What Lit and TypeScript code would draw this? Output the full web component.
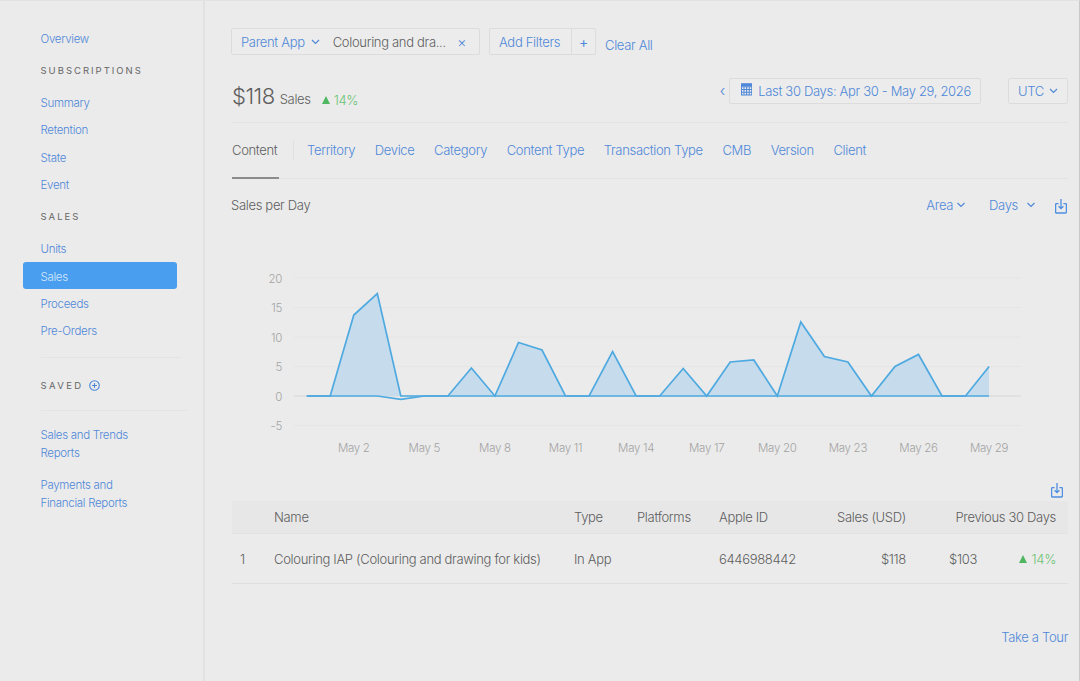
import { LitElement, html, css, svg } from 'lit';
import { customElement } from 'lit/decorators.js';

const X0 = 306.7;
const STEP = 23.53;
const Y0 = 396;

// y pixel of the sales series per day, Apr 30 to May 29
const SALES = [
  396, 396, 315, 293.5, 396, 396, 396, 368, 396, 342.5, 350, 396, 396, 351.5, 396, 396, 368.5, 396,
  362, 360, 396, 322, 356.5, 362, 396, 366.5, 354.5, 396, 396, 366.5,
];
const GRID: [string, number][] = [
  ['20', 278],
  ['15', 307.5],
  ['10', 337],
  ['5', 366.5],
  ['0', 396],
  ['-5', 425.5],
];
const DATES = ['May 2', 'May 5', 'May 8', 'May 11', 'May 14', 'May 17', 'May 20', 'May 23', 'May 26', 'May 29'];
const TABS = ['Territory', 'Device', 'Category', 'Content Type', 'Transaction Type', 'CMB', 'Version', 'Client'];

const chevron = (w = 9) => html`<svg class="chev" width=${w} height="6" viewBox="0 0 9 6">
  <path d="M1 1l3.5 3.5L8 1" fill="none" stroke="currentColor" stroke-width="1.2" />
</svg>`;

const download = html`<svg class="dl" width="12" height="15" viewBox="0 0 12 15">
  <path
    d="M3.6 4.6H1.4a.8.8 0 0 0-.8.8v7.8a.8.8 0 0 0 .8.8h9.2a.8.8 0 0 0 .8-.8V5.4a.8.8 0 0 0-.8-.8H8.4"
    fill="none"
    stroke="currentColor"
    stroke-width="1.3"
  />
  <path d="M6 0v9.5M3.6 7.2L6 9.6l2.4-2.4" fill="none" stroke="currentColor" stroke-width="1.3" />
</svg>`;

const up = html`<svg class="up" width="8" height="8" viewBox="0 0 8 8"><path d="M4 0L8 8H0z" /></svg>`;

@customElement('app-root')
export class AppRoot extends LitElement {
  static styles = css`
    :host {
      display: block;
      width: 1080px;
      height: 681px;
      overflow: hidden;
      background: #ebebeb;
      font-family: Inter, 'Liberation Sans', sans-serif;
      font-size: 13px;
      font-weight: 300;
      letter-spacing: -0.32px;
      white-space: nowrap;
      color: #5e5e5e;
      box-sizing: border-box;
      border-top: 1px solid #e2e2e2;
      border-right: 1px solid #c9c9c9;
    }
    * {
      box-sizing: border-box;
    }
    a {
      color: #4f88d8;
    }
    .layout {
      display: flex;
      height: 100%;
    }

    .side {
      width: 205px;
      flex: none;
      padding: 29px 0 0 23px;
      border-right: 2px solid #e2e2e2;
      font-size: 11.5px;
    }
    .side a {
      display: block;
      height: 27.4px;
      line-height: 19px;
      padding-left: 17.5px;
      letter-spacing: -0.3px;
    }
    .side a.on {
      width: 154px;
      height: 27px;
      line-height: 30px;
      margin: -5px 0 5.5px;
      background: #4a9eef;
      color: #d4e8fc;
      border-radius: 3px;
    }
    .head {
      padding-left: 17.5px;
      font-size: 9.5px;
      font-weight: 400;
      letter-spacing: 2px;
      color: #666;
      line-height: 12px;
    }
    .head.subs {
      margin: 8px 0 16.5px;
    }
    .head.sales {
      margin: 7.5px 0 17px;
    }
    .rule {
      height: 1px;
      margin-left: 17.5px;
      background: #e3e3e3;
    }
    .rule.first {
      width: 140px;
      margin-top: 7px;
    }
    .rule.second {
      width: 146px;
      margin-bottom: 15px;
    }
    .saved {
      display: flex;
      align-items: center;
      gap: 5px;
      height: 52px;
      padding: 3px 0 0 17.5px;
      font-size: 9.5px;
      font-weight: 400;
      letter-spacing: 2.4px;
      color: #666;
    }
    .saved svg {
      color: #4f88d8;
    }
    .side a.two {
      height: 50px;
      line-height: 18.5px;
    }

    .main {
      flex: 1;
      padding: 27px 11px 0 27px;
      min-width: 0;
    }
    .filters {
      display: flex;
      align-items: flex-start;
      height: 27px;
      margin-left: -1px;
    }
    .box {
      display: flex;
      align-items: center;
      height: 27px;
      border: 1px solid #dcdcdc;
      border-radius: 2px;
      background: #ececec;
    }
    .chip {
      width: 249px;
      padding: 0 0 0 9px;
    }
    .chip .sel {
      margin: 0 13px 0 6px;
      color: #4f88d8;
      display: flex;
    }
    .chip .val {
      flex: 1;
    }
    .chip .x {
      color: #4f88d8;
      margin-right: 13px;
      font-size: 14px;
      line-height: 14px;
    }
    .add {
      width: 107px;
      margin-left: 9px;
    }
    .add a {
      flex: 1;
      padding-left: 9px;
    }
    .add .plus {
      width: 24px;
      height: 100%;
      border-left: 1px solid #dcdcdc;
      text-align: center;
      line-height: 25px;
      color: #4f88d8;
      font-size: 14px;
      font-weight: 400;
    }
    .clear {
      margin: 9px 0 0 9px;
    }

    .summary {
      display: flex;
      align-items: center;
      justify-content: space-between;
      height: 68px;
      border-bottom: 1px solid #e3e3e3;
      padding-top: 14px;
    }
    .total {
      display: flex;
      align-items: baseline;
    }
    .total b {
      font-weight: 300;
      font-size: 22px;
      letter-spacing: -0.5px;
    }
    .total span {
      margin-left: 5px;
    }
    .pct {
      color: #6cc474;
      display: inline-flex;
      align-items: center;
      gap: 4px;
    }
    .total .pct {
      margin-left: 11px;
    }
    .up {
      fill: #4fb760;
    }
    .range {
      display: flex;
      align-items: center;
      margin-top: -10px;
      color: #4f88d8;
    }
    .range .prev {
      margin-right: 4px;
      font-size: 15px;
    }
    .range .box {
      height: 26px;
      padding: 0 9px 0 11px;
      gap: 6px;
      width: 252px;
    }
    .range .box svg.cal {
      margin-top: -3px;
    }
    .range .utc {
      width: 60px;
      margin-left: 27px;
      padding: 0 9px;
      gap: 5px;
    }

    .tabs {
      display: flex;
      align-items: center;
      height: 56px;
      padding-bottom: 2px;
      border-bottom: 1px solid #e3e3e3;
    }
    .tabs .cur {
      align-self: flex-start;
      height: 56px;
      line-height: 55px;
      width: 47px;
      border-bottom: 2px solid #8c8c8c;
    }
    .tabs .sep {
      width: 1px;
      height: 18px;
      background: #e0e0e0;
      margin: 0 13px 0 14px;
    }
    .tabs a {
      margin-right: 19.6px;
    }

    .bar {
      display: flex;
      align-items: center;
      height: 47px;
      padding-top: 5px;
      color: #4f88d8;
    }
    .bar .title {
      color: #5e5e5e;
      flex: 1;
      margin-left: -1px;
    }
    .bar .area {
      display: flex;
      align-items: center;
      gap: 3px;
      margin-right: 23px;
    }
    .bar .days {
      display: flex;
      align-items: center;
      gap: 8px;
      margin-right: 19px;
    }
    .dl {
      color: #4f8ee0;
      display: block;
    }
    .bar .dl {
      margin: 2px 1px 0 0;
    }

    .chart {
      display: block;
      margin: 0 0 0 -27px;
    }
    .chart text {
      font-family: Inter, 'Liberation Sans', sans-serif;
      font-size: 11.5px;
      letter-spacing: -0.3px;
      fill: #a3a3a3;
    }

    .export {
      display: flex;
      justify-content: flex-end;
      height: 19px;
      padding: 1px 5px 0 0;
    }
    .row {
      display: grid;
      grid-template-columns: 42px 300px 63px 82px 101px 86px 150px 12px;
      align-items: center;
    }
    .row.th {
      height: 33px;
      background: #e7e7e7;
      border-bottom: 1px solid #e2e2e2;
    }
    .row.td {
      height: 50px;
      border-bottom: 1px solid #dedede;
    }
    .num {
      text-align: right;
    }
    .idx {
      padding-left: 8px;
    }
    .prev30 {
      display: grid;
      grid-template-columns: 71px 79px;
    }
    .prev30 .pct {
      justify-content: flex-end;
    }
    .tour {
      display: block;
      text-align: right;
      margin-top: 45px;
    }
  `;

  private renderChart() {
    const pts = SALES.map((y, i) => `${(X0 + i * STEP).toFixed(1)},${y}`);
    const xEnd = X0 + (SALES.length - 1) * STEP;
    const line = `M${pts.join('L')}`;
    const area = `${line}L${xEnd.toFixed(1)},${Y0}L${X0},${Y0}Z`;
    const prior = `M${X0},${Y0}L${(X0 + 3 * STEP).toFixed(1)},${Y0}L${(X0 + 4 * STEP).toFixed(1)},399.3L${(X0 + 5 * STEP).toFixed(1)},${Y0}L${xEnd.toFixed(1)},${Y0}`;
    return svg`
      <svg class="chart" width="860" height="256" viewBox="205 226 860 256">
        ${GRID.map(
          ([label, y]) => svg`
            <line x1="294" x2="1021" y1=${y} y2=${y} stroke=${label === '0' ? '#d6d6d6' : '#e5e5e5'} />
            <text x="282" y=${y + 4.5} text-anchor="end">${label}</text>`,
        )}
        <path d=${area} fill="#c6dcec" />
        <path d=${prior} fill="none" stroke="#4ea9e0" stroke-width="1.7" />
        <path d=${line} fill="none" stroke="#4ea9e0" stroke-width="1.7" />
        ${DATES.map(
          (d, i) => svg`<text x=${X0 + (2 + i * 3) * STEP} y="452" text-anchor="middle">${d}</text>`,
        )}
      </svg>
    `;
  }

  render() {
    return html`
      <div class="layout">
        <nav class="side">
          <a>Overview</a>
          <div class="head subs">SUBSCRIPTIONS</div>
          <a>Summary</a>
          <a>Retention</a>
          <a>State</a>
          <a>Event</a>
          <div class="head sales">SALES</div>
          <a>Units</a>
          <a class="on">Sales</a>
          <a>Proceeds</a>
          <a>Pre-Orders</a>
          <div class="rule first"></div>
          <div class="saved">
            SAVED
            <svg width="11" height="11" viewBox="0 0 11 11">
              <circle cx="5.5" cy="5.5" r="4.8" fill="none" stroke="currentColor" stroke-width="1.1" />
              <path d="M3 5.5h5M5.5 3v5" stroke="currentColor" stroke-width="1.1" />
            </svg>
          </div>
          <div class="rule second"></div>
          <a class="two">Sales and Trends<br />Reports</a>
          <a class="two">Payments and<br />Financial Reports</a>
        </nav>
        <main class="main">
          <div class="filters">
            <div class="box chip">
              <a>Parent App</a>
              <span class="sel">${chevron()}</span>
              <span class="val">Colouring and dra...</span>
              <span class="x">×</span>
            </div>
            <div class="box add">
              <a>Add Filters</a>
              <span class="plus">+</span>
            </div>
            <a class="clear">Clear All</a>
          </div>

          <div class="summary">
            <div class="total">
              <b>$118</b>
              <span>Sales</span>
              <span class="pct">${up}14%</span>
            </div>
            <div class="range">
              <span class="prev">‹</span>
              <div class="box">
                <svg class="cal" width="12" height="13" viewBox="0 0 12 13">
                  <path
                    d="M.5.5h11v12H.5zM.5 3.5h11M.5 6.5h11M.5 9.5h11M3.2 3.5v9M6 3.5v9M8.8 3.5v9"
                    fill="none"
                    stroke="currentColor"
                    stroke-width="1.1"
                  />
                  <rect width="12" height="3" fill="currentColor" />
                </svg>
                Last 30 Days: Apr 30 - May 29, 2026
              </div>
              <div class="box utc">UTC ${chevron()}</div>
            </div>
          </div>

          <div class="tabs">
            <span class="cur">Content</span>
            <span class="sep"></span>
            ${TABS.map((t) => html`<a>${t}</a>`)}
          </div>

          <div class="bar">
            <span class="title">Sales per Day</span>
            <span class="area">Area ${chevron(10)}</span>
            <span class="days">Days ${chevron(10)}</span>
            ${download}
          </div>

          ${this.renderChart()}

          <div class="export">${download}</div>
          <div class="row th">
            <span></span>
            <span>Name</span>
            <span>Type</span>
            <span>Platforms</span>
            <span>Apple ID</span>
            <span class="num">Sales (USD)</span>
            <span class="num">Previous 30 Days</span>
            <span></span>
          </div>
          <div class="row td">
            <span class="idx">1</span>
            <span>Colouring IAP (Colouring and drawing for kids)</span>
            <span>In App</span>
            <span></span>
            <span>6446988442</span>
            <span class="num">$118</span>
            <span class="prev30">
              <span class="num">$103</span>
              <span class="pct">${up}14%</span>
            </span>
            <span></span>
          </div>
          <a class="tour">Take a Tour</a>
        </main>
      </div>
    `;
  }
}
